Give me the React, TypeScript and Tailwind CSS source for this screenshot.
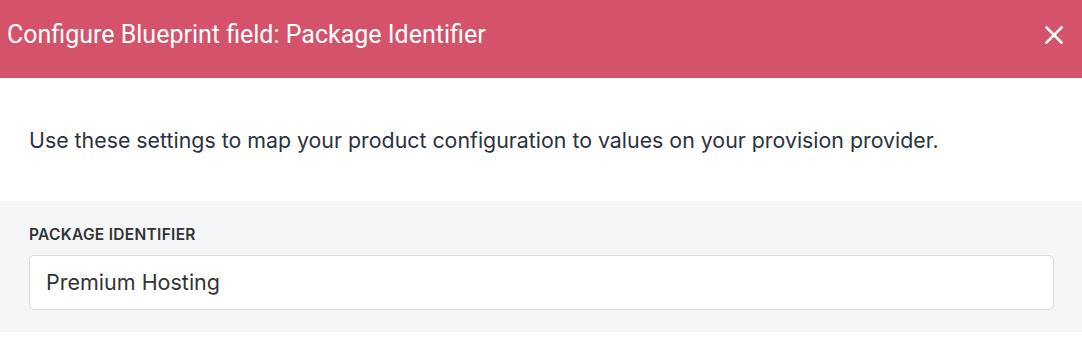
export default function App() {
  return (
    <div className="w-[1082px] h-[348px] bg-white font-['Inter',sans-serif] overflow-hidden">
      <div className="h-[78px] bg-[#d4536a] flex items-center justify-between pl-[7px] pr-[19px] pb-[9px]">
        <h1 className="font-['Roboto',sans-serif] text-[25px] font-normal text-white leading-[30px]">Configure Blueprint field: Package Identifier</h1>
        <svg width="18" height="18" viewBox="0 0 18 18" className="text-white">
          <path d="M1.5 1.5 L16.5 16.5 M16.5 1.5 L1.5 16.5" stroke="currentColor" strokeWidth="2.6" strokeLinecap="square" />
        </svg>
      </div>
      <div className="h-[123px] flex items-center px-[29px]">
        <p className="text-[21.35px] text-[#2b3240] leading-[28px]">Use these settings to map your product configuration to values on your provision provider.</p>
      </div>
      <div className="bg-[#f5f6f8] pt-[24px] pb-[22px] pl-[29px] pr-[28px]">
        <label className="block text-[15.5px] leading-[20px] font-semibold tracking-[0.3px] text-[#333] mb-[10px]">PACKAGE IDENTIFIER</label>
        <div className="h-[55px] bg-white border border-[#dcdcdc] rounded-[5px] flex items-center px-[16px] text-[21.5px] text-[#333]">Premium Hosting</div>
      </div>
    </div>
  );
}
